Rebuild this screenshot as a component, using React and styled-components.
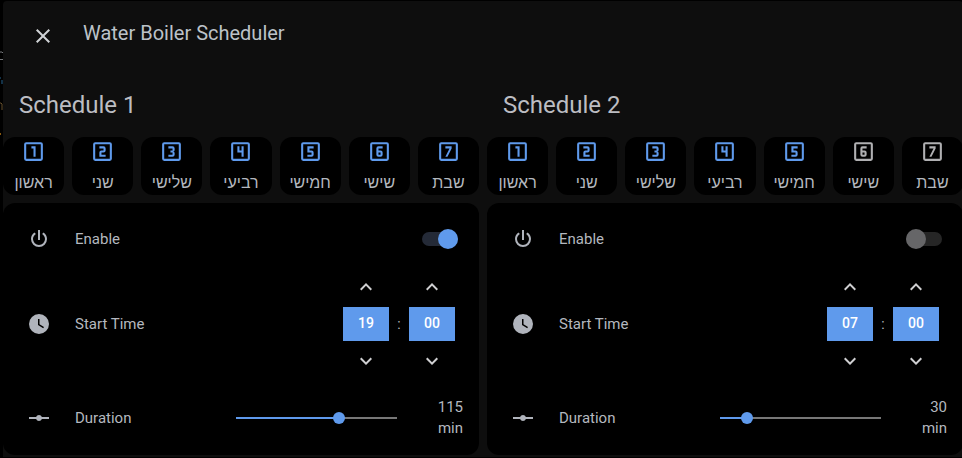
import React, { useState } from "react";
import styled, { createGlobalStyle } from "styled-components";

const BLUE = "#5f9aec";
const TEXT = "#b4b8bf";

const GlobalStyle = createGlobalStyle`
  *, *::before, *::after { box-sizing: border-box; }
  body {
    margin: 0;
    background: #000;
    color: ${TEXT};
    font: 400 14px/20px Roboto, "Open Sans", sans-serif;
    overflow: hidden;
  }
`;

const Page = styled.div`
  padding: 1px 0 0 3px;
  overflow: hidden;
`;

const Backdrop = styled.svg`
  position: absolute;
  left: 0;
  top: 0;
`;

const Dialog = styled.main`
  background: #0e0e0e;
  border-radius: 4px 4px 0 0;
  margin-right: -1px;
  padding-bottom: 2px;
`;

const Header = styled.header`
  display: flex;
  align-items: flex-start;
  gap: 20px;
  height: 80px;
  padding: 15px 20px 0;
`;

const IconButton = styled.button`
  display: flex;
  align-items: center;
  justify-content: center;
  width: 40px;
  height: 40px;
  padding: 0;
  border: 0;
  background: none;
  color: ${(p) => p.$color || TEXT};
  cursor: pointer;
`;

const Title = styled.h1`
  margin: 0;
  color: #bcc2c8;
  font-size: 20px;
  font-weight: 400;
  line-height: 34px;
`;

const Columns = styled.div`
  display: grid;
  grid-template-columns: 1fr 1fr;
  gap: 8px;
`;

const Heading = styled.h2`
  margin: 0;
  padding: 0 16px;
  color: #bcbdc2;
  font-size: 24px;
  font-weight: 400;
  line-height: 48px;
`;

const Days = styled.div`
  display: grid;
  grid-template-columns: repeat(7, 1fr);
  gap: 8px;
  padding: 8px 0;
`;

const DayButton = styled.button`
  display: flex;
  flex-direction: column;
  align-items: center;
  justify-content: space-between;
  height: 58px;
  padding: 2px 0 1px;
  border: 0;
  border-radius: 12px;
  background: #000;
  color: ${TEXT};
  font: 400 16px/22px "Liberation Sans", Arial, sans-serif;
  cursor: pointer;

  svg { color: ${(p) => (p.$on ? BLUE : "#b0b0b2")}; }
`;

const Card = styled.div`
  display: flex;
  flex-direction: column;
  gap: 8px;
  padding: 16px;
  border-radius: 12px;
  background: #000;
`;

const Row = styled.div`
  display: flex;
  align-items: center;
  min-height: 40px;
  margin-bottom: ${(p) => (p.$spaced ? 8 : 0)}px;
`;

const RowIcon = styled.span`
  display: flex;
  justify-content: center;
  width: 40px;
  margin-right: 16px;
  color: #b0b4bc;
`;

const Label = styled.label`
  flex: 1 1 0;
  font-size: 15px;
`;

const Switch = styled.input`
  appearance: none;
  display: flex;
  align-items: center;
  width: 36px;
  height: 20px;
  margin: 0 5px 0 0;
  cursor: pointer;

  &::before {
    content: "";
    flex: none;
    width: 36px;
    height: 14px;
    border-radius: 7px;
    background: #262626;
  }
  &::after {
    content: "";
    flex: none;
    width: 20px;
    height: 20px;
    margin-left: -36px;
    border-radius: 50%;
    background: #666668;
  }
  &:checked::before { background: #242a37; }
  &:checked::after { margin-left: -20px; background: ${BLUE}; }
`;

const TimePicker = styled.div`
  display: flex;
  align-items: center;
  margin-right: 8px;
`;

const Spinner = styled.div`
  display: flex;
  flex-direction: column;
  align-items: center;
  width: 46px;
`;

const TimeInput = styled.input`
  width: 100%;
  height: 34px;
  padding: 0 0 2px;
  border: 0;
  border-radius: 0;
  background: ${BLUE};
  color: #fff;
  font: 500 14px/20px Roboto, sans-serif;
  text-align: center;
`;

const Colon = styled.span`
  width: 20px;
  text-align: center;
`;

const Slider = styled.input`
  appearance: none;
  flex: 1 1 12px;
  min-width: 0;
  height: 20px;
  margin: 0 -6px;
  background:
    linear-gradient(to right, ${BLUE} var(--fill), #777 var(--fill))
    center / calc(100% - 12px) 2px no-repeat;
  cursor: pointer;

  &::-webkit-slider-thumb {
    appearance: none;
    width: 12px;
    height: 12px;
    border: 0;
    border-radius: 50%;
    background: ${BLUE};
  }
`;

const Value = styled.output`
  display: flex;
  flex-direction: column;
  align-items: flex-end;
  width: 66px;
  line-height: 21px;
  font-size: 15px;
`;

const PATHS = {
  close:
    "M19,6.41L17.59,5L12,10.59L6.41,5L5,6.41L10.59,12L5,17.59L6.41,19L12,13.41L17.59,19L19,17.59L13.41,12L19,6.41Z",
  power:
    "M16.56,5.44L15.11,6.89C16.84,7.94 18,9.83 18,12A6,6 0 0,1 12,18A6,6 0 0,1 6,12C6,9.83 7.16,7.94 8.88,6.88L7.44,5.44C5.36,6.88 4,9.28 4,12A8,8 0 0,0 12,20A8,8 0 0,0 20,12C20,9.28 18.64,6.88 16.56,5.44M13,3H11V13H13",
  clock:
    "M12,2A10,10 0 0,0 2,12A10,10 0 0,0 12,22A10,10 0 0,0 22,12A10,10 0 0,0 12,2M16.2,16.2L11,13V7H12.5V12.2L17,14.9L16.2,16.2Z",
  slider:
    "M2,11H9.17C9.58,9.83 10.69,9 12,9C13.31,9 14.42,9.83 14.83,11H22V13H14.83C14.42,14.17 13.31,15 12,15C10.69,15 9.58,14.17 9.17,13H2V11Z",
  up: "M7.41,15.41L12,10.83L16.59,15.41L18,14L12,8L6,14L7.41,15.41Z",
  down: "M7.41,8.58L12,13.17L16.59,8.58L18,10L12,16L6,10L7.41,8.58Z",
};

const BOX =
  "M19,3H5A2,2 0 0,0 3,5V19A2,2 0 0,0 5,21H19A2,2 0 0,0 21,19V5A2,2 0 0,0 19,3M19,19H5V5H19V19Z";

const NUMERALS = [
  "M12,17H14V7H10V9H12V17Z",
  "M15,15H11V13H13A2,2 0 0,0 15,11V9A2,2 0 0,0 13,7H9V9H13V11H11A2,2 0 0,0 9,13V17H15V15Z",
  "M15,15V13.5A1.5,1.5 0 0,0 13.5,12A1.5,1.5 0 0,0 15,10.5V9A2,2 0 0,0 13,7H9V9H13V11H11V13H13V15H9V17H13A2,2 0 0,0 15,15Z",
  "M13,17H15V7H13V11H11V7H9V13H13V17Z",
  "M9,17H13A2,2 0 0,0 15,15V13A2,2 0 0,0 13,11H11V9H15V7H9V13H13V15H9V17Z",
  "M11,17H13A2,2 0 0,0 15,15V13A2,2 0 0,0 13,11H11V9H15V7H11A2,2 0 0,0 9,9V15A2,2 0 0,0 11,17M11,13H13V15H11V13Z",
  "M11,17L15,9V7H9V9H13L9,17H11Z",
];

const Icon = ({ d, size = 24 }) => (
  <svg width={size} height={size} viewBox="0 0 24 24" fill="currentColor" fillRule="evenodd" aria-hidden="true">
    <path d={d} />
  </svg>
);

const DAYS = ["ראשון", "שני", "שלישי", "רביעי", "חמישי", "שישי", "שבת"];

const pad = (n) => String(n).padStart(2, "0");

function TimeUnit({ id, label, value, max, onChange }) {
  const step = (by) => onChange((value + by + max) % max);
  return (
    <Spinner>
      <IconButton $color="#d0d0d2" aria-label={`${label} up`} onClick={() => step(1)}>
        <Icon d={PATHS.up} />
      </IconButton>
      <TimeInput
        id={id}
        aria-label={label}
        value={pad(value)}
        onChange={(e) => onChange((Number(e.target.value) || 0) % max)}
      />
      <IconButton $color="#d0d0d2" aria-label={`${label} down`} onClick={() => step(-1)}>
        <Icon d={PATHS.down} />
      </IconButton>
    </Spinner>
  );
}

function Schedule({ number, initial }) {
  const [days, setDays] = useState(initial.days);
  const [enabled, setEnabled] = useState(initial.enabled);
  const [hour, setHour] = useState(initial.hour);
  const [minute, setMinute] = useState(0);
  const [duration, setDuration] = useState(initial.duration);
  const id = (name) => `${name}-${number}`;

  return (
    <section>
      <Heading>Schedule {number}</Heading>
      <Days>
        {DAYS.map((day, i) => (
          <DayButton
            key={day}
            $on={days[i]}
            aria-pressed={days[i]}
            onClick={() => setDays(days.map((on, j) => (j === i ? !on : on)))}
          >
            <Icon d={BOX + NUMERALS[i]} size={25} />
            <span lang="he">{day}</span>
          </DayButton>
        ))}
      </Days>
      <Card>
        <Row>
          <RowIcon><Icon d={PATHS.power} /></RowIcon>
          <Label htmlFor={id("enable")}>Enable</Label>
          <Switch
            id={id("enable")}
            type="checkbox"
            role="switch"
            checked={enabled}
            onChange={(e) => setEnabled(e.target.checked)}
          />
        </Row>
        <Row $spaced>
          <RowIcon><Icon d={PATHS.clock} /></RowIcon>
          <Label htmlFor={id("hour")}>Start Time</Label>
          <TimePicker>
            <TimeUnit id={id("hour")} label="Hour" value={hour} max={24} onChange={setHour} />
            <Colon>:</Colon>
            <TimeUnit id={id("minute")} label="Minute" value={minute} max={60} onChange={setMinute} />
          </TimePicker>
        </Row>
        <Row>
          <RowIcon><Icon d={PATHS.slider} /></RowIcon>
          <Label htmlFor={id("duration")}>Duration</Label>
          <Slider
            id={id("duration")}
            type="range"
            min={0}
            max={180}
            step={5}
            value={duration}
            onChange={(e) => setDuration(Number(e.target.value))}
            style={{ "--fill": `${(duration / 180) * 100}%` }}
          />
          <Value htmlFor={id("duration")}>
            <span>{duration}</span>
            <span>min</span>
          </Value>
        </Row>
      </Card>
    </section>
  );
}

const SCHEDULES = [
  { days: [true, true, true, true, true, true, true], enabled: true, hour: 19, duration: 115 },
  { days: [true, true, true, true, true, false, false], enabled: false, hour: 7, duration: 30 },
];

export default function App() {
  return (
    <>
      <GlobalStyle />
      <Page>
        <Backdrop width="3" height="140" aria-hidden="true">
          <path d="M0,52h2l1,1M0,59.5h3" stroke="#77797c" fill="none" />
          <path d="M0,78h1M2,80v4" stroke="#24628e" fill="none" />
          <path d="M0,103h1l1,1v6" stroke="#66502c" fill="none" />
          <path d="M0,134h1" stroke="#8a5a10" strokeWidth="2" />
        </Backdrop>
        <Dialog>
          <Header>
            <IconButton aria-label="Close" $color="#d0d3d6">
              <Icon d={PATHS.close} />
            </IconButton>
            <Title>Water Boiler Scheduler</Title>
          </Header>
          <Columns>
            {SCHEDULES.map((s, i) => (
              <Schedule key={i} number={i + 1} initial={s} />
            ))}
          </Columns>
        </Dialog>
      </Page>
    </>
  );
}
